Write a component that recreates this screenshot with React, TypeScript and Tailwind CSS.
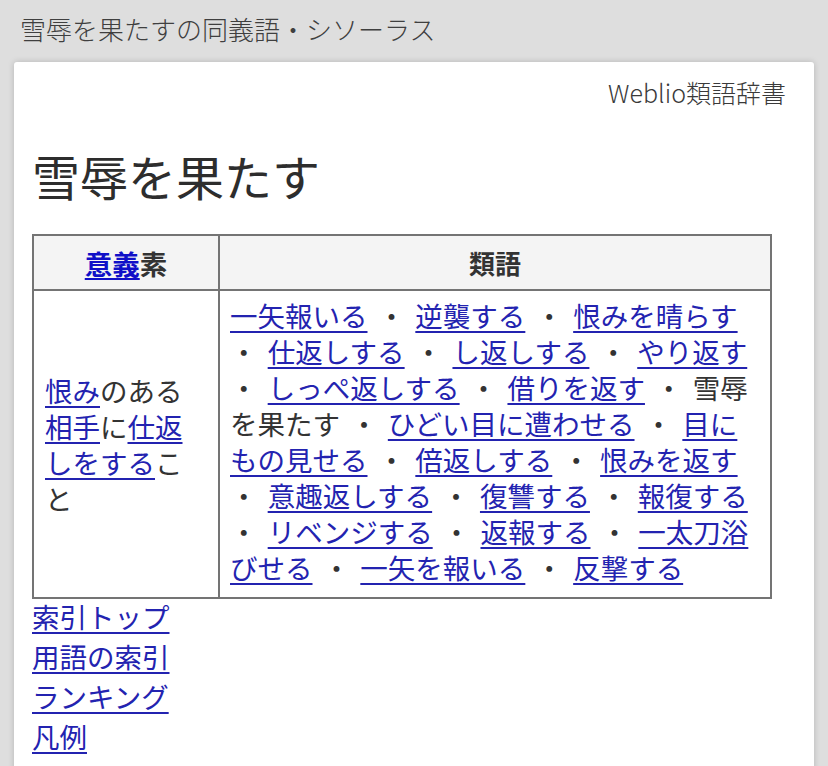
const font = "font-['Noto_Sans_CJK_JP','Noto_Sans',sans-serif]";

type Item = { text: string; link: boolean };

const synonyms: Item[] = [
  { text: "一矢報いる", link: true },
  { text: "逆襲する", link: true },
  { text: "恨みを晴らす", link: true },
  { text: "仕返しする", link: true },
  { text: "し返しする", link: true },
  { text: "やり返す", link: true },
  { text: "しっぺ返しする", link: true },
  { text: "借りを返す", link: true },
  { text: "雪辱を果たす", link: false },
  { text: "ひどい目に遭わせる", link: true },
  { text: "目にもの見せる", link: true },
  { text: "倍返しする", link: true },
  { text: "恨みを返す", link: true },
  { text: "意趣返しする", link: true },
  { text: "復讐する", link: true },
  { text: "報復する", link: true },
  { text: "リベンジする", link: true },
  { text: "返報する", link: true },
  { text: "一太刀浴びせる", link: true },
  { text: "一矢を報いる", link: true },
  { text: "反撃する", link: true },
];

const footerLinks = ["索引トップ", "用語の索引", "ランキング", "凡例"];

function A({ children, bold }: { children: React.ReactNode; bold?: boolean }) {
  return (
    <a href="#" className={bold ? "text-[#1010c8] underline underline-offset-[3px]" : "text-[#2323b0] underline underline-offset-[4px]"}>
      {children}
    </a>
  );
}

export default function App() {
  return (
    <div className={`${font} min-h-[766px] bg-[#dedede] text-[#333]`}>
      <header className="flex h-[62px] items-center px-5 pb-1">
        <h1 className="text-[26px] leading-[32px] font-light text-[#3f3f3f]">雪辱を果たすの同義語・シソーラス</h1>
      </header>

      <main className="mx-[14px] min-h-[704px] rounded-t-[3px] bg-white pl-[18px] pr-[28px] pt-[14px] shadow-[0_0_6px_rgba(0,0,0,0.18)]">
        <div className="text-right text-[25px] leading-[32px] font-light text-[#3a3a3a]">Weblio類語辞書</div>

        <h2 className="mt-[39px] mb-[31px] text-[48px] leading-[56px] text-[#2d2d2d]">雪辱を果たす</h2>

        <table className="w-[740px] table-fixed border-collapse border-2 border-[#747474] text-[27.5px] leading-[36px]">
          <colgroup>
            <col className="w-[186px]" />
            <col />
          </colgroup>
          <thead>
            <tr className="h-[55px] bg-[#f4f4f4]">
              <th className="border-2 border-[#747474] font-bold">
                <A bold>意義</A>素
              </th>
              <th className="border-2 border-[#747474] text-[26px] font-bold">類語</th>
            </tr>
          </thead>
          <tbody>
            <tr>
              <td className="border-2 border-[#747474] pl-[11px] pr-[20px] align-middle">
                <A>恨み</A>のある<A>相手</A>に<A>仕返しをする</A>こと
              </td>
              <td className="border-2 border-[#747474] px-[10px] pt-[6px] pb-[12px] align-top [word-spacing:4px]">
                {synonyms.map((s, i) => (
                  <span key={s.text}>
                    {i > 0 && " ・ "}
                    {s.link ? <A>{s.text}</A> : s.text}
                  </span>
                ))}
              </td>
            </tr>
          </tbody>
        </table>

        <ul className="-mt-[3px] pb-4 text-[27.5px] leading-[40px]">
          {footerLinks.map((l) => (
            <li key={l}>
              <A>{l}</A>
            </li>
          ))}
        </ul>
      </main>
    </div>
  );
}
